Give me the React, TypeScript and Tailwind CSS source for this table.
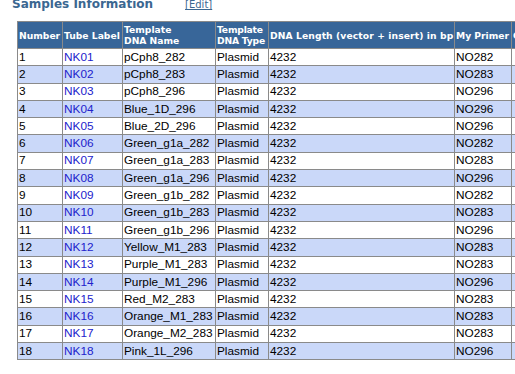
const rows = [
  ["NK01", "pCph8_282", "NO282"],
  ["NK02", "pCph8_283", "NO283"],
  ["NK03", "pCph8_296", "NO296"],
  ["NK04", "Blue_1D_296", "NO296"],
  ["NK05", "Blue_2D_296", "NO296"],
  ["NK06", "Green_g1a_282", "NO282"],
  ["NK07", "Green_g1a_283", "NO283"],
  ["NK08", "Green_g1a_296", "NO296"],
  ["NK09", "Green_g1b_282", "NO282"],
  ["NK10", "Green_g1b_283", "NO283"],
  ["NK11", "Green_g1b_296", "NO296"],
  ["NK12", "Yellow_M1_283", "NO283"],
  ["NK13", "Purple_M1_283", "NO283"],
  ["NK14", "Purple_M1_296", "NO296"],
  ["NK15", "Red_M2_283", "NO283"],
  ["NK16", "Orange_M1_283", "NO283"],
  ["NK17", "Orange_M2_283", "NO283"],
  ["NK18", "Pink_1L_296", "NO296"],
];

const th =
  "border border-[#8a8a8a] bg-[#386699] px-[1px] py-0 text-left align-middle font-bold leading-[11px] text-white whitespace-nowrap overflow-hidden";
const td = "border border-[#8a8a8a] px-[1px] py-0 h-[17.3px] leading-[15px] align-middle whitespace-nowrap";

export default function App() {
  return (
    <div className="h-[374px] w-[515px] overflow-hidden bg-white">
      <div className="ml-[12px] -mt-[3px] flex items-baseline font-['DejaVu_Sans',sans-serif]">
        <h2 className="text-[12px] font-bold leading-[12px] text-[#3b6791]">
          Samples Information
        </h2>
        <a className="ml-[32px] text-[10px] text-[#3b6791] underline">[Edit]</a>
      </div>

      <table className="ml-[17px] mt-[9px] w-[584px] max-w-none table-fixed border-collapse text-[11.8px] font-['Liberation_Sans',Arial,sans-serif] text-black">
        <colgroup>
          <col className="w-[45px]" />
          <col className="w-[60px]" />
          <col className="w-[93px]" />
          <col className="w-[53px]" />
          <col className="w-[186px]" />
          <col className="w-[57px]" />
          <col className="w-[90px]" />
        </colgroup>
        <thead className="text-[9.2px] font-['DejaVu_Sans',sans-serif]">
          <tr className="h-[27px]">
            <th className={th}>Number</th>
            <th className={th}>Tube Label</th>
            <th className={th}>
              Template
              <br />
              DNA Name
            </th>
            <th className={`${th} tracking-[-0.2px]`}>
              Template
              <br />
              DNA Type
            </th>
            <th className={`${th} tracking-[0.1px]`}>DNA Length (vector + insert) in bp</th>
            <th className={th}>My Primer</th>
            <th className={th}>Comments</th>
          </tr>
        </thead>
        <tbody>
          {rows.map((r, i) => (
            <tr key={r[0]} className={i % 2 === 1 ? "bg-[#cad8f9]" : "bg-white"}>
              <td className={td}>{i + 1}</td>
              <td className={`${td} text-[#2222cc]`}>{r[0]}</td>
              <td className={td}>{r[1]}</td>
              <td className={td}>Plasmid</td>
              <td className={td}>4232</td>
              <td className={td}>{r[2]}</td>
              <td className={td}></td>
            </tr>
          ))}
        </tbody>
      </table>
    </div>
  );
}
